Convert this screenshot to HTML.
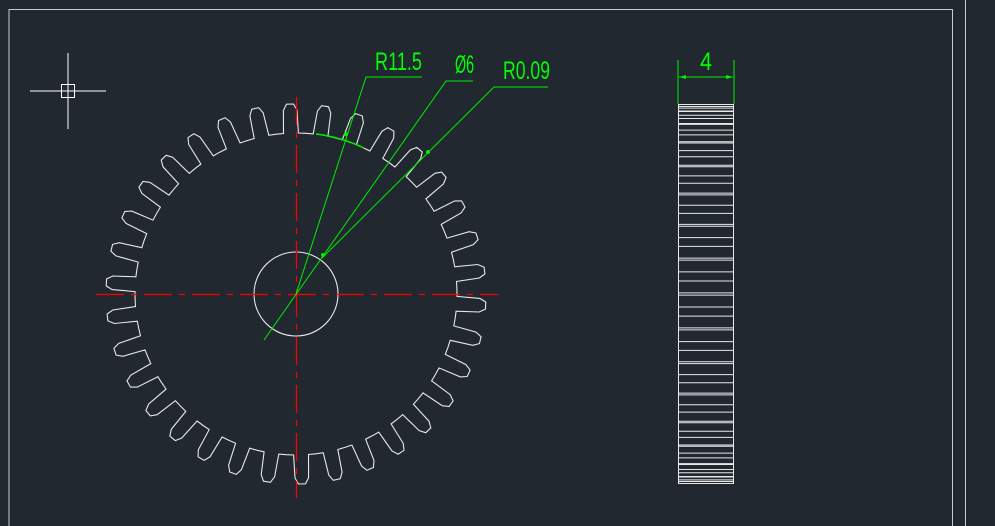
<!DOCTYPE html>
<html><head><meta charset="utf-8"><style>
html,body{margin:0;padding:0;background:#212830;overflow:hidden}
svg{display:block}
text{font-family:"Liberation Sans",sans-serif;fill:#00ff00}
</style></head><body>
<svg id="s" width="995" height="526" viewBox="0 0 995 526" xmlns="http://www.w3.org/2000/svg">
<rect width="995" height="526" fill="#212830"/>
<path d="M9 526V9.5H952.5V526M965.5 0V526" stroke="#c8ccd0" stroke-width="1" fill="none"/>
<g stroke="#ffffff" stroke-width="1" fill="none">
<path d="M30 91H106M68 53V129"/><rect x="61.5" y="84.5" width="13" height="13"/>
</g>
<g id="gear" stroke="#e8e8e8" stroke-width="1.1" fill="none"></g>
<circle cx="296" cy="294" r="42" stroke="#e8e8e8" stroke-width="1.1" fill="none"/>
<g stroke="#ff0000" stroke-width="1.2" stroke-dasharray="28,7,6,7">
<path d="M96 294.5H498"/><path d="M296.5 97V498"/>
</g>
<g stroke="#00ee00" stroke-width="1" fill="none">
<path d="M296 294L366 77H422"/>
<path d="M264 340L446 81H473"/>
<path d="M322 258L494 87H548"/>
<path d="M316 134A161 161 0 0 1 364 148" stroke-width="1.5"/>
<path d="M678 60V104M734 60V104M679 77H733" />
</g>
<g fill="#00ee00"><path d="M679 77l7-2v4zM733 77l-7-2v4z"/><circle cx="346" cy="134" r="2"/><circle cx="428" cy="152" r="2"/><circle cx="323" cy="255" r="2"/></g>
<text x="375" y="70" font-size="25" textLength="47" lengthAdjust="spacingAndGlyphs">R11.5</text>
<text x="455" y="73" font-size="25" textLength="19" lengthAdjust="spacingAndGlyphs">Ø6</text>
<text x="503" y="79" font-size="25" textLength="47" lengthAdjust="spacingAndGlyphs">R0.09</text>
<text x="700" y="70" font-size="25" textLength="12" lengthAdjust="spacingAndGlyphs">4</text>
<g id="side" stroke="#e8e8e8" stroke-width="1" fill="none"><rect x="678.5" y="104.5" width="55" height="379"/></g>
</svg>
<script>
var N=34,cx=296,cy=294,Ro=190,Rr=161,d="";
var off=-1.8*Math.PI/180;
function P(r,a){return (cx+r*Math.sin(a)).toFixed(1)+" "+(cy-r*Math.cos(a)).toFixed(1);}
var p=2*Math.PI/N,ys=[];
for(var i=0;i<N;i++){var c=i*p+off;
var pts=[[Rr,c-p*0.5],[Rr,c-p*0.25],[Ro-6,c-p*0.2],[Ro,c-p*0.1],[Ro,c+p*0.1],[Ro-6,c+p*0.2],[Rr,c+p*0.25],[Rr,c+p*0.5]];
pts.forEach(function(q,j){d+=(i==0&&j==0?"M":"L")+P(q[0],q[1]);});
[c-p*0.2,c+p*0.2].forEach(function(a){ys.push(cy-Ro*Math.cos(a+Math.PI/2));});}
d+="Z";
var g=document.getElementById("gear");g.innerHTML='<path d="'+d+'"/>';
var s="";ys.forEach(function(y){if(y>105&&y<483)s+='<path d="M679 '+y.toFixed(1)+'H733"/>';});
document.getElementById("side").innerHTML+=s;
</script>
</body></html>
